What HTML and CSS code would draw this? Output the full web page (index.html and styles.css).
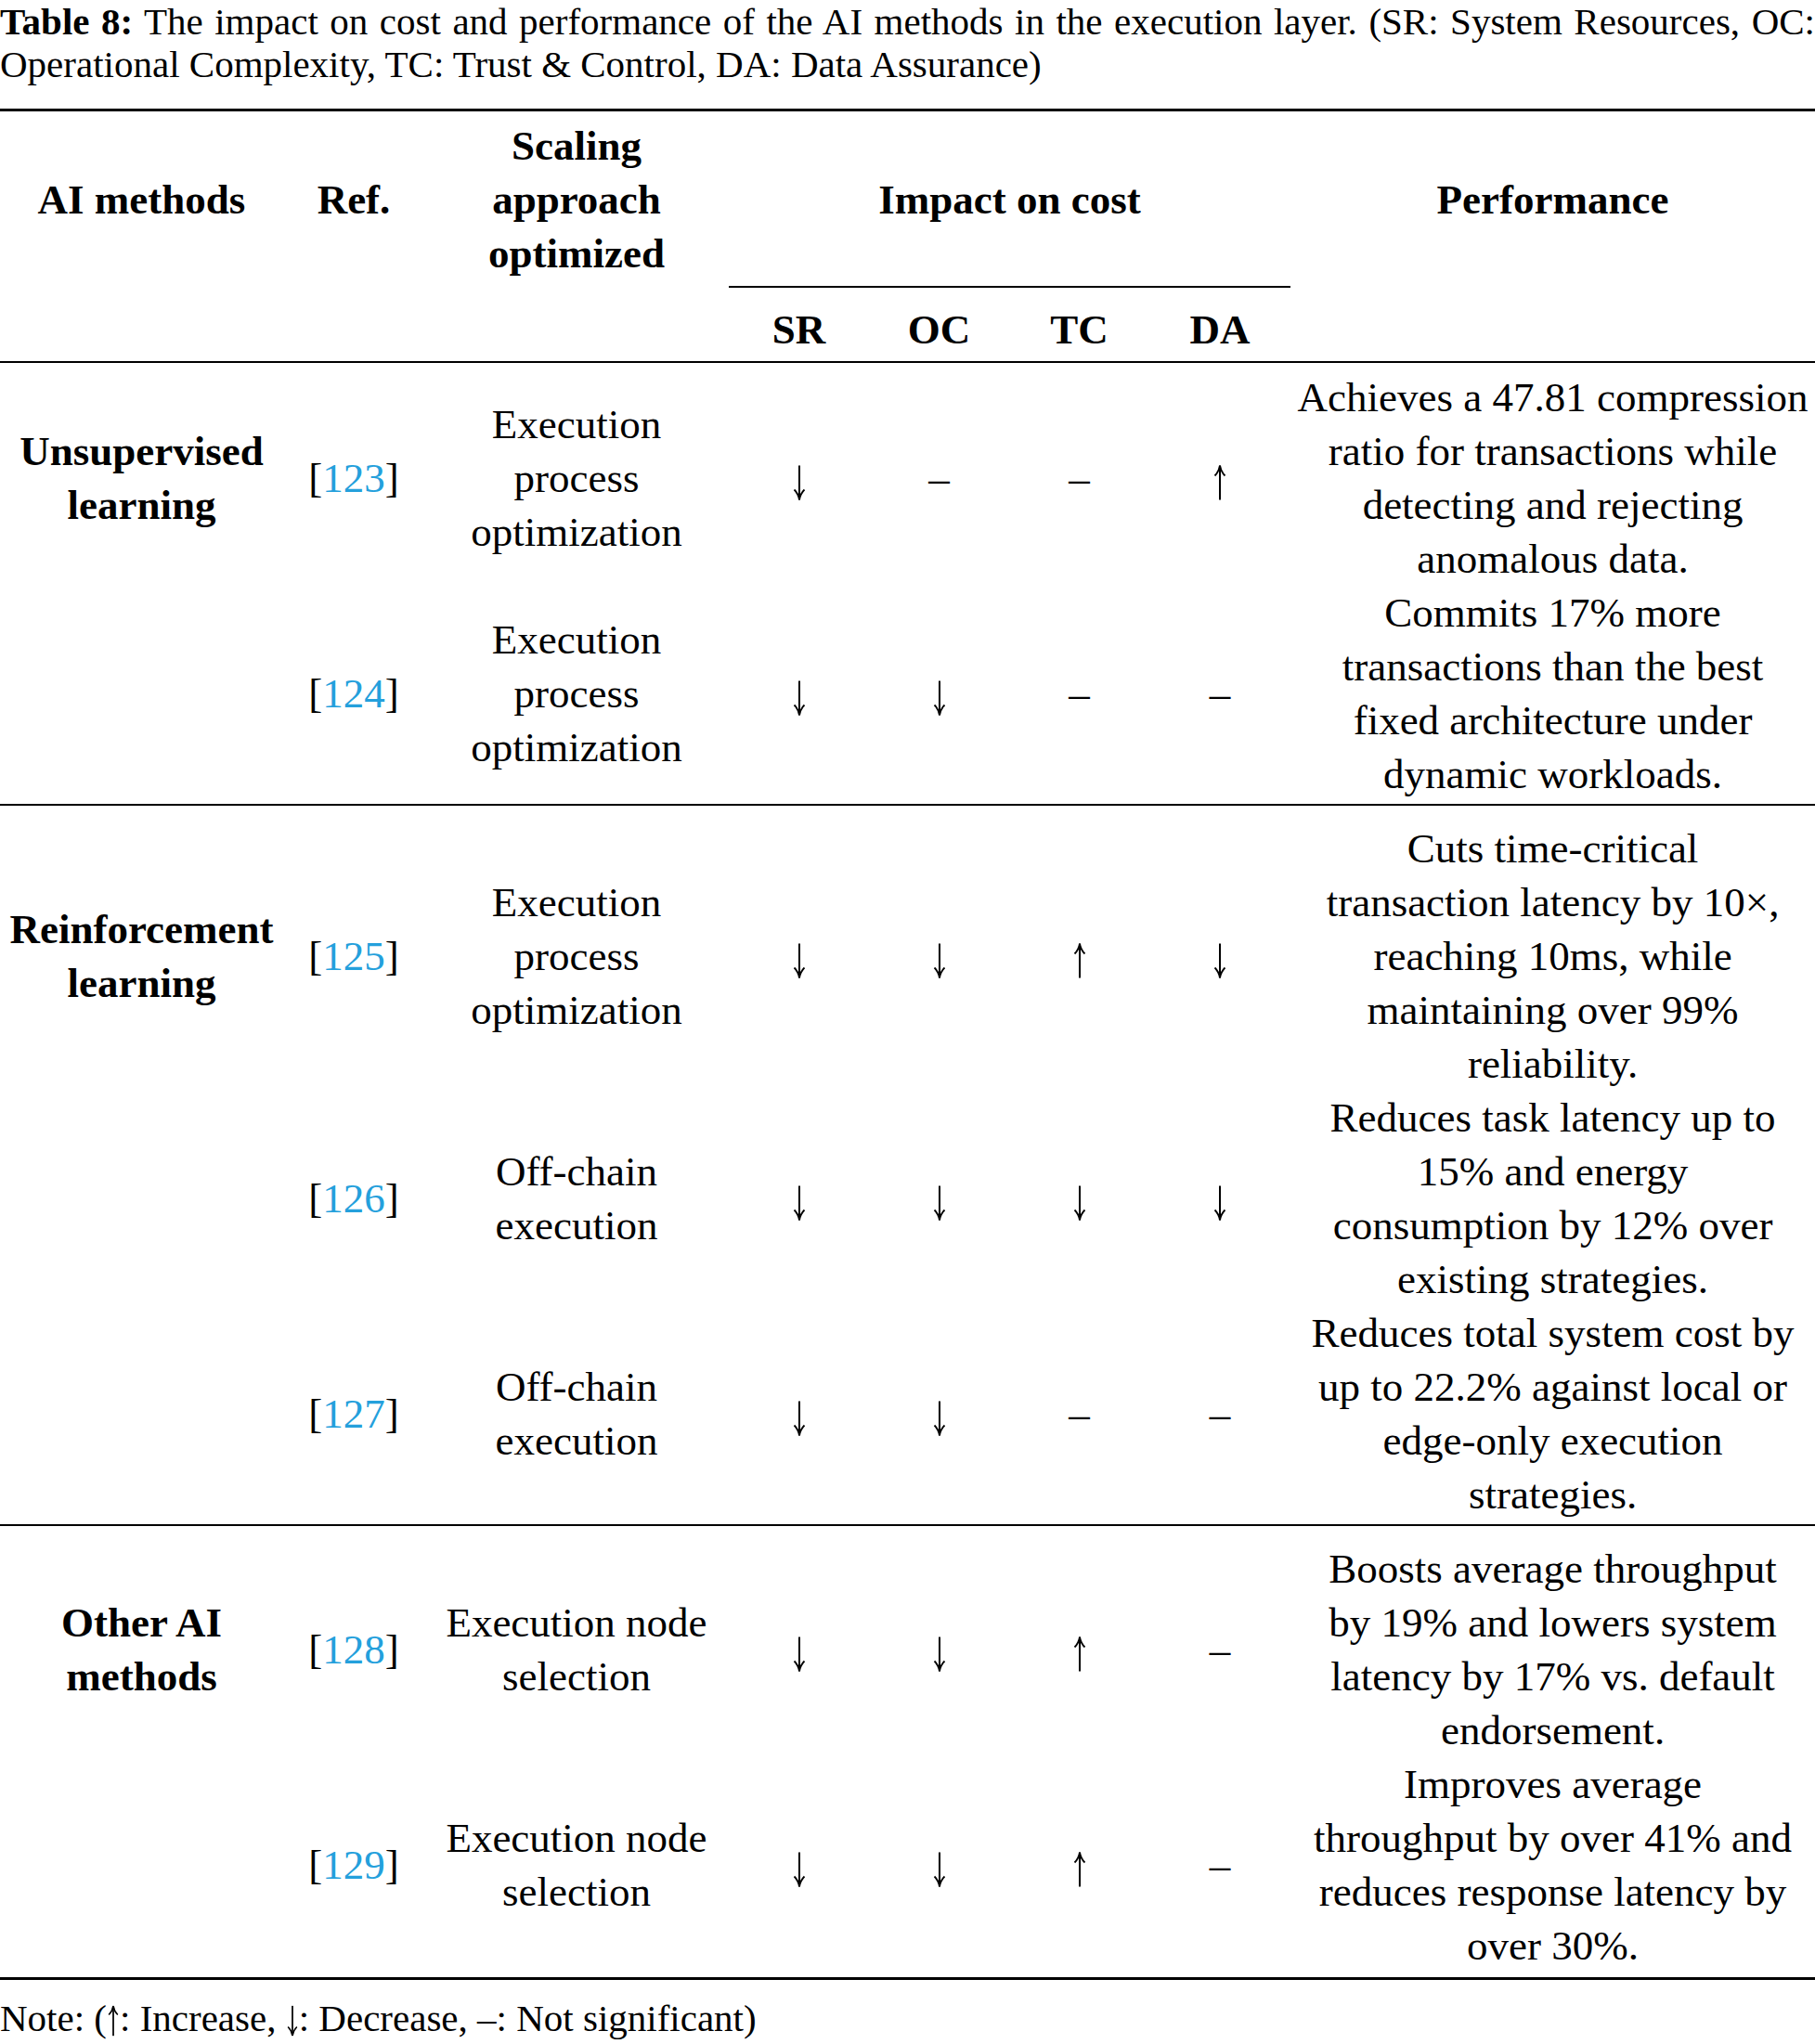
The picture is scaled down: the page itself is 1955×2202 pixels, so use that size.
FILE: index.html
```html
<!DOCTYPE html>
<html lang="en">
<head>
<meta charset="utf-8">
<title>Table 8</title>
<link rel="stylesheet" href="styles.css">
</head>
<body>
<p class="caption"><span class="cap-label">Table 8:</span> <span>The impact on cost and performance of the AI methods in the execution layer. (SR: System Resources, OC:</span> <span>Operational Complexity, TC: Trust &amp; Control, DA: Data Assurance)</span></p>
<table class="tbl">
  <colgroup>
    <col class="c-method"><col class="c-ref"><col class="c-scale"><col class="c-imp"><col class="c-imp"><col class="c-imp"><col class="c-imp2"><col class="c-perf">
  </colgroup>
  <thead>
    <tr class="h1">
      <th>AI methods</th>
      <th>Ref.</th>
      <th>Scaling<br>approach<br>optimized</th>
      <th colspan="4" class="cmid">Impact on cost</th>
      <th>Performance</th>
    </tr>
    <tr class="h2">
      <th></th><th></th><th></th>
      <th>SR</th><th>OC</th><th>TC</th><th>DA</th>
      <th></th>
    </tr>
  </thead>
  <tbody class="grp first">
    <tr>
      <td class="method">Unsupervised<br>learning</td>
      <td>[<a class="cite">123</a>]</td>
      <td>Execution<br>process<br>optimization</td>
      <td><svg class="arr" viewBox="0 0 16 38"><use href="#down"/></svg></td>
      <td>–</td>
      <td>–</td>
      <td><svg class="arr" viewBox="0 0 16 38"><use href="#up"/></svg></td>
      <td class="perf">Achieves a 47.81 compression<br>ratio for transactions while<br>detecting and rejecting<br>anomalous data.</td>
    </tr>
    <tr>
      <td></td>
      <td>[<a class="cite">124</a>]</td>
      <td>Execution<br>process<br>optimization</td>
      <td><svg class="arr" viewBox="0 0 16 38"><use href="#down"/></svg></td>
      <td><svg class="arr" viewBox="0 0 16 38"><use href="#down"/></svg></td>
      <td>–</td>
      <td>–</td>
      <td class="perf">Commits 17% more<br>transactions than the best<br>fixed architecture under<br>dynamic workloads.</td>
    </tr>
  </tbody>
  <tbody class="grp">
    <tr>
      <td class="method">Reinforcement<br>learning</td>
      <td>[<a class="cite">125</a>]</td>
      <td>Execution<br>process<br>optimization</td>
      <td><svg class="arr" viewBox="0 0 16 38"><use href="#down"/></svg></td>
      <td><svg class="arr" viewBox="0 0 16 38"><use href="#down"/></svg></td>
      <td><svg class="arr" viewBox="0 0 16 38"><use href="#up"/></svg></td>
      <td><svg class="arr" viewBox="0 0 16 38"><use href="#down"/></svg></td>
      <td class="perf">Cuts time-critical<br>transaction latency by 10×,<br>reaching 10ms, while<br>maintaining over 99%<br>reliability.</td>
    </tr>
    <tr>
      <td></td>
      <td>[<a class="cite">126</a>]</td>
      <td>Off-chain<br>execution</td>
      <td><svg class="arr" viewBox="0 0 16 38"><use href="#down"/></svg></td>
      <td><svg class="arr" viewBox="0 0 16 38"><use href="#down"/></svg></td>
      <td><svg class="arr" viewBox="0 0 16 38"><use href="#down"/></svg></td>
      <td><svg class="arr" viewBox="0 0 16 38"><use href="#down"/></svg></td>
      <td class="perf">Reduces task latency up to<br>15% and energy<br>consumption by 12% over<br>existing strategies.</td>
    </tr>
    <tr>
      <td></td>
      <td>[<a class="cite">127</a>]</td>
      <td>Off-chain<br>execution</td>
      <td><svg class="arr" viewBox="0 0 16 38"><use href="#down"/></svg></td>
      <td><svg class="arr" viewBox="0 0 16 38"><use href="#down"/></svg></td>
      <td>–</td>
      <td>–</td>
      <td class="perf">Reduces total system cost by<br>up to 22.2% against local or<br>edge-only execution<br>strategies.</td>
    </tr>
  </tbody>
  <tbody class="grp last">
    <tr>
      <td class="method">Other AI<br>methods</td>
      <td>[<a class="cite">128</a>]</td>
      <td>Execution node<br>selection</td>
      <td><svg class="arr" viewBox="0 0 16 38"><use href="#down"/></svg></td>
      <td><svg class="arr" viewBox="0 0 16 38"><use href="#down"/></svg></td>
      <td><svg class="arr" viewBox="0 0 16 38"><use href="#up"/></svg></td>
      <td>–</td>
      <td class="perf">Boosts average throughput<br>by 19% and lowers system<br>latency by 17% vs. default<br>endorsement.</td>
    </tr>
    <tr>
      <td></td>
      <td>[<a class="cite">129</a>]</td>
      <td>Execution node<br>selection</td>
      <td><svg class="arr" viewBox="0 0 16 38"><use href="#down"/></svg></td>
      <td><svg class="arr" viewBox="0 0 16 38"><use href="#down"/></svg></td>
      <td><svg class="arr" viewBox="0 0 16 38"><use href="#up"/></svg></td>
      <td>–</td>
      <td class="perf">Improves average<br>throughput by over 41% and<br>reduces response latency by<br>over 30%.</td>
    </tr>
  </tbody>
</table>
<p class="note">Note: (<svg class="arr-s" viewBox="0 0 16 38"><use href="#up"/></svg>: Increase, <svg class="arr-s" viewBox="0 0 16 38"><use href="#down"/></svg>: Decrease, –: Not significant)</p>
<svg class="defs" aria-hidden="true">
  <symbol id="down" viewBox="0 0 16 38">
    <path d="M8 0.5 V37" fill="none" stroke="#000" stroke-width="2"/>
    <path d="M2.5 26.5 C5.5 29.5 7.2 32.5 8 37.5 C8.8 32.5 10.5 29.5 13.5 26.5" fill="none" stroke="#000" stroke-width="1.8"/>
  </symbol>
  <symbol id="up" viewBox="0 0 16 38">
    <path d="M8 1 V37.5" fill="none" stroke="#000" stroke-width="2"/>
    <path d="M2.5 11.5 C5.5 8.5 7.2 5.5 8 0.5 C8.8 5.5 10.5 8.5 13.5 11.5" fill="none" stroke="#000" stroke-width="1.8"/>
  </symbol>
</svg>
</body>
</html>
```

FILE: styles.css
```css
html, body {
  margin: 0;
  padding: 0;
  background: #fff;
}

body {
  width: 1955px;
  font-family: "Liberation Serif", "Times New Roman", serif;
  color: #000;
}

.caption {
  margin: 0 0 25px;
  font-size: 41px;
  line-height: 46px;
  text-align: justify;
}

.cap-label {
  font-weight: bold;
}

.tbl {
  width: 1955px;
  table-layout: fixed;
  border-collapse: separate;
  border-spacing: 0;
  font-size: 45px;
  line-height: 58px;
}

.c-method { width: 305px; }
.c-ref { width: 152px; }
.c-scale { width: 328px; }
.c-imp { width: 151px; }
.c-imp2 { width: 152px; }
.c-perf { width: 565px; }

.tbl th,
.tbl td {
  padding: 0;
  text-align: center;
  vertical-align: middle;
  white-space: nowrap;
}

.tbl th {
  font-weight: bold;
}

.h1 th {
  border-top: 3px solid #000;
  border-bottom: 2px solid transparent;
  padding: 8px 0 6px;
}

.h1 th.cmid {
  border-bottom-color: #000;
}

.h2 th {
  padding: 16px 0 5px;
  border-bottom: 2px solid #000;
}

.grp tr:first-child td {
  padding-top: 17px;
}

.grp.first tr:first-child td {
  padding-top: 8px;
}

.grp tr:last-child td {
  padding-bottom: 3px;
  border-bottom: 2px solid #000;
}

.grp.last tr:last-child td {
  padding-bottom: 5px;
  border-bottom-width: 3px;
}

.method {
  font-weight: bold;
}

.cite {
  color: #24a0dc;
  text-decoration: none;
}

.arr {
  width: 16px;
  height: 38px;
  vertical-align: middle;
}

.arr-s {
  width: 14px;
  height: 34px;
  vertical-align: -6px;
}

.note {
  margin: 16px 0 0;
  font-size: 41px;
  line-height: 50px;
}

.defs {
  display: block;
  width: 0;
  height: 0;
  overflow: hidden;
}
```
